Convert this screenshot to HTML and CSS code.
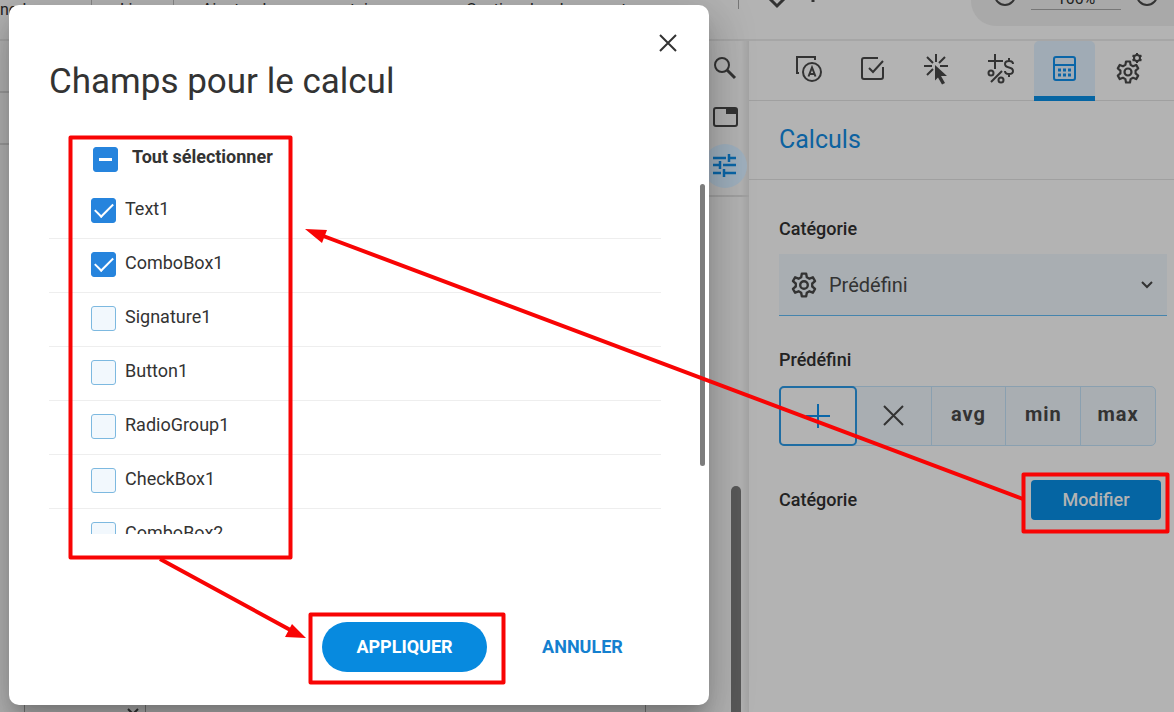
FILE: index.html
```html
<!DOCTYPE html>
<html lang="fr">
<head>
    <meta charset="UTF-8">
    <meta name="viewport" content="width=device-width, initial-scale=1.0">
    <title>Champs pour le calcul</title>
    <link rel="stylesheet" href="styles.css">
</head>
<body>
    <div class="app">
        <!-- Top toolbar -->
        <header class="topbar">
            <nav class="tools">
                <a href="#" class="tool first">ned</a>
                <a href="#" class="tool link">Lien</a>
                <a href="#" class="tool comments">Ajouter des commentaires</a>
                <a href="#" class="tool">Gestion des documents</a>
            </nav>
            <div class="topbar-right">
                <svg class="top-icon" viewBox="0 0 24 24" width="24" height="24"><path d="M5 11l7 7 7-7" /></svg>
                <svg class="top-icon" viewBox="0 0 24 24" width="24" height="24"><path d="M12 9v5" /></svg>
                <div class="zoom">
                    <svg class="top-icon" viewBox="0 0 24 24" width="24" height="24"><circle cx="12" cy="12" r="10" /><path d="M7 12h10" /></svg>
                    <input type="text" class="zoom-value" value="100%" aria-label="Zoom">
                    <svg class="top-icon" viewBox="0 0 24 24" width="24" height="24"><circle cx="12" cy="12" r="10" /><path d="M7 12h10M12 7v10" /></svg>
                </div>
            </div>
        </header>

        <div class="workspace">
            <main class="document">
                <div class="row"></div>
                <div class="row"></div>
                <div class="page-bottom">
                    <div class="field-box">
                        <svg viewBox="0 0 12 12" width="12" height="12"><path d="M1 9l5 5 5-5" /></svg>
                    </div>
                </div>
            </main>

            <!-- Vertical tool rail -->
            <aside class="rail">
                <div class="rail-tools">
                    <button class="rail-btn" aria-label="Rechercher">
                        <svg viewBox="0 0 26 26" width="26" height="26"><circle cx="10" cy="10" r="7" /><path d="M15 15l8 8" stroke-width="3" /></svg>
                    </button>
                    <button class="rail-btn" aria-label="Pages">
                        <svg viewBox="0 0 26 26" width="26" height="26"><rect x="2" y="4" width="23" height="18" rx="2" /><path d="M14 4h11v6H14z" fill="#333" stroke="none" /></svg>
                    </button>
                    <button class="rail-btn active" aria-label="Propriétés">
                        <svg viewBox="0 0 26 26" width="26" height="26"><g stroke-width="2.5"><path d="M1 5h13M17 5h7M17 1v8M1 12h7M8 8v8M11 12h13M1 20h8M12 20h12M12 16v8" /></g></svg>
                    </button>
                </div>
                <div class="rail-scroll"></div>
            </aside>

            <!-- Properties panel -->
            <section class="panel">
                <div class="tabs">
                    <button class="tab" aria-label="Apparence">
                        <svg viewBox="0 0 32 32" width="32" height="32">
                            <path d="M6 20H4V4h18v3" />
                            <circle cx="19" cy="19" r="9" />
                            <path d="M15.500 23.500L19 14.500l3.500 9M16.500 21h5" />
                        </svg>
                    </button>
                    <button class="tab" aria-label="Validation">
                        <svg viewBox="0 0 32 32" width="32" height="32">
                            <path d="M21 5H7a2 2 0 0 0-2 2v17a2 2 0 0 0 2 2h17a2 2 0 0 0 2-2V14M12 15l4 4 10-11" />
                        </svg>
                    </button>
                    <button class="tab" aria-label="Actions">
                        <svg viewBox="0 0 32 32" width="32" height="32">
                            <path d="M15 1v8M6 4l6 6M24 4l-6 6M3 13h8M19 13h8M6 22l6-6" />
                            <path d="M14 12l12 11h-6l4 7-3 1.500-4-7-3 3z" fill="#333" stroke="none" />
                        </svg>
                    </button>
                    <button class="tab" aria-label="Format">
                        <svg viewBox="0 0 32 32" width="32" height="32">
                            <path d="M10 1v15M3 8h15M6 29L17 18" />
                            <circle cx="6" cy="20" r="2.500" /><circle cx="16" cy="27" r="2.500" />
                            <path d="M28 11c0-2-1.500-3-4-3s-4 1-4 3 1.500 3 4 3.500 4 1.500 4 3.500-1.500 3-4 3-4-1-4-3M24 5v3M24 21v3" />
                        </svg>
                    </button>
                    <button class="tab active" aria-label="Calculs">
                        <svg viewBox="0 0 32 32" width="32" height="32">
                            <rect x="5" y="4" width="21" height="23" rx="2" /><path d="M5 12h21" />
                            <path d="M9 17h3M14 17h3M19 17h3M9 22h3M14 22h3M19 22h3" stroke-width="3" />
                        </svg>
                    </button>
                    <button class="tab" aria-label="Options">
                        <svg viewBox="0 0 32 32" width="32" height="32">
                            <use href="#gear" x="3" y="7" width="24" height="24" />
                            <circle cx="24" cy="5" r="3" />
                            <path d="M24 0v2M24 8v2M19.500 2.500l2 1M26.500 6.500l2 1M19.500 7.500l2-1M26.500 3.500l2-1" />
                        </svg>
                    </button>
                </div>
                <h2 class="panel-title">Calculs</h2>

                <div class="panel-body">
                    <label class="label" for="category">Catégorie</label>
                    <div class="select-box">
                        <svg class="gear" viewBox="0 0 24 24" width="26" height="26"><use href="#gear" /></svg>
                        <select id="category">
                            <option>Prédéfini</option>
                        </select>
                        <svg class="arrow" viewBox="0 0 16 16" width="16" height="16"><path d="M3 5l5 5 5-5" /></svg>
                    </div>

                    <div class="label">Prédéfini</div>
                    <div class="operations">
                        <button class="op selected" aria-label="Somme">
                            <svg viewBox="0 0 26 26" width="26" height="26"><path d="M13 1v24M1 13h24" /></svg>
                        </button>
                        <button class="op" aria-label="Produit">
                            <svg viewBox="0 0 26 26" width="26" height="26"><path d="M3 3l19 19M22 3L3 22" /></svg>
                        </button>
                        <button class="op text">avg</button>
                        <button class="op text">min</button>
                        <button class="op text">max</button>
                    </div>

                    <div class="edit-row">
                        <span class="label">Catégorie</span>
                        <button class="edit-btn">Modifier</button>
                    </div>
                </div>
            </section>
        </div>
    </div>

    <!-- Dialog -->
    <div class="dialog" role="dialog" aria-labelledby="dialogTitle">
        <button class="close" aria-label="Fermer">
            <svg viewBox="0 0 20 20" width="20" height="20"><path d="M2 2l16 16M18 2L2 18" /></svg>
        </button>
        <h1 id="dialogTitle">Champs pour le calcul</h1>

        <div class="fields">
            <label class="field all"><input type="checkbox" id="selectAll"><span>Tout sélectionner</span></label>
            <label class="field"><input type="checkbox" checked><span>Text1</span></label>
            <label class="field"><input type="checkbox" checked><span>ComboBox1</span></label>
            <label class="field"><input type="checkbox"><span>Signature1</span></label>
            <label class="field"><input type="checkbox"><span>Button1</span></label>
            <label class="field"><input type="checkbox"><span>RadioGroup1</span></label>
            <label class="field"><input type="checkbox"><span>CheckBox1</span></label>
            <label class="field"><input type="checkbox"><span>ComboBox2</span></label>
        </div>
        <div class="dialog-scroll"></div>

        <div class="dialog-actions">
            <button class="apply">APPLIQUER</button>
            <button class="cancel">ANNULER</button>
        </div>
    </div>

    <!-- Red frames and arrows -->
    <svg class="marks" viewBox="0 0 1174 712" width="1174" height="712">
        <rect x="70.500" y="137.500" width="220" height="420" />
        <rect x="310.500" y="614.500" width="193" height="68" />
        <rect x="1023.500" y="474.500" width="144" height="57" />
        <path d="M1023 499L318 234M160 559l134 73" />
        <path class="head" d="M305 229l22 1-5 13zM306 638l-21-1 7-13z" />
    </svg>

    <svg width="0" height="0" class="defs">
        <symbol id="gear" viewBox="0 0 24 24">
            <path d="M10 1.500h4l.6 3.400 2.400 1.300 3.200-1.300 2 3.500-2.600 2.200v2.800l2.600 2.200-2 3.500-3.200-1.300-2.400 1.300-.6 3.400h-4l-.6-3.400L7 17.800l-3.200 1.300-2-3.500 2.600-2.200v-2.800L1.800 8.400l2-3.500L7 6.200l2.400-1.300z" fill="none" stroke="currentColor" stroke-width="2.2" stroke-linejoin="round" />
            <circle cx="12" cy="12" r="3.500" fill="none" stroke="currentColor" stroke-width="2.2" />
        </symbol>
    </svg>

    <script>
        // Only some of the fields are ticked
        document.getElementById('selectAll').indeterminate = true;
    </script>
</body>
</html>
```
FILE: styles.css
```css
* {
    box-sizing: border-box;
}

body {
    margin: 0;
    font-family: Roboto, "Liberation Sans", sans-serif;
    font-size: 18px;
    color: #333;
    background-color: #b3b3b3;
    overflow: hidden;
}

button {
    font-family: inherit;
    border: none;
    background: none;
    padding: 0;
    color: inherit;
    cursor: pointer;
}

svg {
    display: block;
    flex: none;
    fill: none;
    stroke: currentColor;
    stroke-width: 2;
}

.app {
    display: flex;
    flex-direction: column;
    height: 100vh;
}

/* Top toolbar */
.topbar {
    display: flex;
    justify-content: space-between;
    height: 41px;
    flex: none;
    border-bottom: 2px solid #a6a6a6;
    overflow: hidden;
}

.tools {
    display: flex;
    height: 20px;
}

.tool {
    padding: 0 28px;
    font-size: 16px;
    line-height: 20px;
    color: #222;
    text-decoration: none;
    white-space: nowrap;
}

.tool.first {
    width: 92px;
    padding: 0;
    border-right: 1px solid #888;
}

.tool.link {
    width: 82px;
    border-right: 1px solid #888;
}

.tool.comments {
    width: 264px;
}

.topbar-right {
    display: flex;
    align-items: flex-start;
    gap: 12px;
    width: 436px;
    flex: none;
    height: 9px;
    border-left: 1px solid #777;
    padding-left: 26px;
}

.top-icon {
    margin-top: -12px;
    stroke-width: 3;
}

.zoom {
    display: flex;
    gap: 14px;
    height: 50px;
    width: 203px;
    flex: none;
    margin: -24px 0 0 auto;
    padding: 18px 22px 0;
    border-radius: 25px 0 0 25px;
    background-color: #a9a9a9;
}

.zoom .top-icon {
    margin-top: -11px;
    stroke-width: 2;
}

.zoom-value {
    width: 90px;
    flex: none;
    height: 16px;
    padding: 0 0 7px;
    border: none;
    border-bottom: 1px solid #777;
    background: none;
    font: 16px Roboto, sans-serif;
    text-align: center;
    color: #222;
}

.workspace {
    display: grid;
    grid-template-columns: 1fr 40px 425px;
    flex: 1;
    min-height: 0;
}

/* Document area behind the dialog */
.document {
    display: flex;
    flex-direction: column;
    background-color: #b3b3b3;
}

.row {
    height: 52px;
    border-bottom: 2px solid #9b9b9b;
}

.page-bottom {
    width: 622px;
    height: 60px;
    margin: auto 0 0 24px;
    border: 1px solid #777;
    border-width: 0 1px;
    display: flex;
}

.field-box {
    display: flex;
    align-items: flex-end;
    justify-content: flex-end;
    width: 121px;
    padding-right: 6px;
    border-right: 1px solid #777;
}

.rail {
    display: flex;
    flex-direction: column;
    align-items: flex-start;
    background: linear-gradient(to right, #b3b3b3 80%, #a3a3a3);
}

.rail-tools {
    display: flex;
    flex-direction: column;
    align-items: center;
    width: 100%;
    height: 156px;
    padding-right: 8px;
    border-bottom: 2px solid #a0a0a0;
}

.rail-btn {
    display: flex;
    align-items: center;
    justify-content: center;
    width: 44px;
    height: 44px;
    margin-top: 5px;
    border-radius: 50%;
}

.rail-btn.active {
    color: #0a66a8;
    background-color: #9fb0be;
}

.rail-scroll {
    width: 10px;
    flex: 1;
    margin: 289px 0 0 22px;
    border-radius: 5px 5px 0 0;
    background-color: #595959;
}

/* Properties panel */
.panel {
    background-color: #b3b3b3;
}

.tabs {
    display: flex;
    gap: 3px;
    height: 60px;
    padding-left: 29px;
    border-bottom: 1px solid #a0a0a0;
}

.tab {
    display: flex;
    align-items: center;
    justify-content: center;
    width: 61px;
    height: 60px;
    padding-bottom: 4px;
    border-radius: 5px 5px 0 0;
}

.tab.active {
    color: #0a66a8;
    background-color: #a0abb5;
    border-bottom: 5px solid #0565a3;
    padding-bottom: 0;
}

.panel-title {
    height: 79px;
    margin: 0;
    padding-left: 30px;
    border-bottom: 1px solid #a0a0a0;
    font-size: 25px;
    font-weight: 400;
    line-height: 78px;
    color: #0d62a0;
}

.panel-body {
    padding: 36px 7px 0 30px;
}

.label {
    display: block;
    font-size: 18px;
    font-weight: 500;
    line-height: 26px;
    color: #222;
}

.select-box {
    display: flex;
    align-items: center;
    gap: 12px;
    height: 62px;
    margin: 12px 0 31px;
    padding: 0 12px;
    background-color: #a9aeb2;
    border-bottom: 1px solid #4584ad;
}

.select-box select {
    flex: 1;
    appearance: none;
    border: none;
    padding: 0;
    background: none;
    font: 20px Roboto, sans-serif;
    color: #333;
}

.operations {
    display: flex;
    width: 377px;
    height: 60px;
    margin: 13px 0 34px;
    border: 1px solid #8aa0b0;
    border-radius: 5px;
    background-color: #a9aeb2;
}

.op {
    display: flex;
    align-items: center;
    justify-content: center;
    flex: 1;
    border-right: 1px solid #8aa0b0;
    font-size: 20px;
    font-weight: 700;
}

.op.text {
    padding-bottom: 4px;
    letter-spacing: 1px;
}

.op:last-child {
    border-right: none;
}

.op.selected {
    margin: -1px 0 -1px -1px;
    border: 2px solid #1f6da3;
    border-radius: 5px;
    background-color: #b3b3b3;
    color: #0a66a8;
}

.edit-row {
    display: flex;
    align-items: center;
    justify-content: space-between;
    padding-right: 6px;
}

.edit-btn {
    width: 130px;
    height: 40px;
    padding-bottom: 2px;
    border-radius: 4px;
    background-color: #0565a3;
    color: #b3b3b3;
    font-size: 18px;
    font-weight: 500;
}

/* Dialog */
.dialog {
    position: absolute;
    top: 5px;
    left: 9px;
    width: 700px;
    height: calc(100vh - 12px);
    display: flex;
    flex-direction: column;
    padding: 52px 40px 33px;
    border-radius: 10px;
    background-color: #fff;
    box-shadow: 0 11px 15px -7px rgba(0, 0, 0, 0.2), 0 24px 38px 3px rgba(0, 0, 0, 0.14), 0 9px 46px 8px rgba(0, 0, 0, 0.12);
}

.dialog h1 {
    margin: 0 0 26px;
    font-size: 35px;
    font-weight: 400;
    line-height: 50px;
}

.close {
    position: absolute;
    top: 28px;
    right: 31px;
}

.fields {
    height: 401px;
    width: 612px;
    overflow: hidden;
}

.field {
    display: flex;
    align-items: center;
    gap: 9px;
    height: 54px;
    padding: 0 0 2px 42px;
    border-bottom: 1px solid #eee;
    line-height: 26px;
}

.field span {
    padding-bottom: 4px;
}

.field.all {
    height: 52px;
    padding: 0 0 0 44px;
    gap: 14px;
    border-bottom: none;
    font-weight: 700;
}

.field input {
    display: flex;
    align-items: center;
    justify-content: center;
    appearance: none;
    width: 25px;
    height: 25px;
    margin: 0;
    border: 1px solid #7db9e0;
    border-radius: 3px;
    background-color: #f2f8fd;
}

.field input:checked,
.field input:indeterminate {
    border-color: #2684dd;
    background-color: #2684dd;
}

.field input:checked::before {
    content: "";
    width: 16px;
    height: 8px;
    margin-bottom: 5px;
    border: solid #fff;
    border-width: 0 0 2px 2px;
    transform: rotate(-45deg);
}

.field input:indeterminate::before {
    content: "";
    width: 13px;
    height: 3px;
    background-color: #fff;
}

.dialog-scroll {
    position: absolute;
    top: 179px;
    right: 4px;
    width: 5px;
    height: 282px;
    border-radius: 3px;
    background-color: #7d7d7d;
}

.dialog-actions {
    display: flex;
    gap: 20px;
    margin-top: auto;
    padding-left: 273px;
}

.dialog-actions button {
    height: 50px;
    padding-bottom: 2px;
    font-size: 18px;
    font-weight: 700;
}

.apply {
    width: 165px;
    border-radius: 25px;
    background-color: #078adf;
    color: #fff;
}

.cancel {
    width: 151px;
    color: #1480cf;
}

/* Red frames and arrows */
.marks {
    position: absolute;
    top: 0;
    left: 0;
    stroke: #f80404;
    stroke-width: 4;
    stroke-linejoin: round;
    pointer-events: none;
}

.marks .head {
    fill: #f80404;
    stroke: none;
}

.defs {
    position: absolute;
}
```
